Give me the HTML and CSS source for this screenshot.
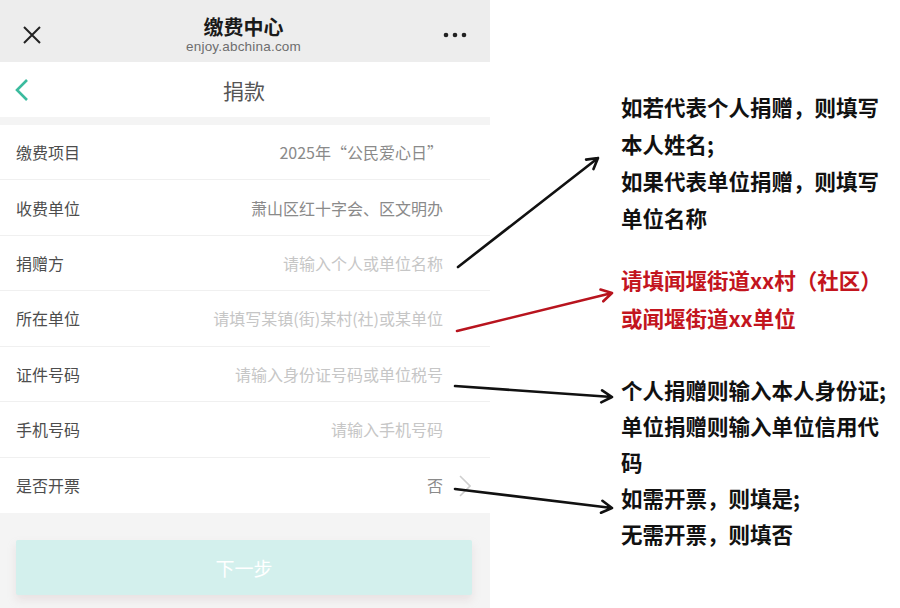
FILE: index.html
```html
<!DOCTYPE html>
<html lang="zh-CN">

<head>
  <meta charset="UTF-8">
  <meta name="viewport" content="width=device-width, initial-scale=1.0">
  <title>捐款</title>
  <link rel="stylesheet" href="styles.css">
</head>

<body>
  <div class="page">
    <div class="phone">
      <div class="topbar">
        <svg class="close-icon" width="20" height="20" viewBox="0 0 20 20">
          <path d="M2 2 L18 18 M18 2 L2 18" stroke="#222" stroke-width="2" fill="none" />
        </svg>
        <div class="topbar-title">
          <div class="topbar-name">缴费中心</div>
          <div class="topbar-url">enjoy.abchina.com</div>
        </div>
        <svg class="more-icon" width="24" height="6" viewBox="0 0 24 6">
          <circle cx="3" cy="3" r="2.3" fill="#222" />
          <circle cx="12" cy="3" r="2.3" fill="#222" />
          <circle cx="21" cy="3" r="2.3" fill="#222" />
        </svg>
      </div>

      <div class="navbar">
        <svg class="back-icon" width="14" height="24" viewBox="0 0 14 24">
          <path d="M12 2 L2 12 L12 22" stroke="#3bbb9e" stroke-width="2.6" fill="none" />
        </svg>
        <div class="navbar-title">捐款</div>
      </div>

      <div class="form-list">
        <div class="form-row">
          <span class="form-label">缴费项目</span>
          <span class="form-value">2025年“公民爱心日”</span>
        </div>
        <div class="form-row">
          <span class="form-label">收费单位</span>
          <span class="form-value">萧山区红十字会、区文明办</span>
        </div>
        <div class="form-row">
          <span class="form-label">捐赠方</span>
          <span class="form-value placeholder">请输入个人或单位名称</span>
        </div>
        <div class="form-row">
          <span class="form-label">所在单位</span>
          <span class="form-value placeholder">请填写某镇(街)某村(社)或某单位</span>
        </div>
        <div class="form-row">
          <span class="form-label">证件号码</span>
          <span class="form-value placeholder">请输入身份证号码或单位税号</span>
        </div>
        <div class="form-row">
          <span class="form-label">手机号码</span>
          <span class="form-value placeholder">请输入手机号码</span>
        </div>
        <div class="form-row">
          <span class="form-label">是否开票</span>
          <span class="form-value">否</span>
          <svg class="row-arrow" width="12" height="22" viewBox="0 0 12 22">
            <path d="M1 1 L11 11 L1 21" stroke="#cfcfcf" stroke-width="1.6" fill="none" />
          </svg>
        </div>
      </div>

      <div class="footer">
        <button class="next-btn">下一步</button>
      </div>
    </div>

    <div class="notes">
      <div class="note note-donor">如若代表个人捐赠，则填写<br>本人姓名;<br>如果代表单位捐赠，则填写<br>单位名称</div>
      <div class="note note-red">请填闻堰街道xx村（社区）<br>或闻堰街道xx单位</div>
      <div class="note note-id">个人捐赠则输入本人身份证;<br>单位捐赠则输入单位信用代<br>码</div>
      <div class="note note-invoice">如需开票，则填是;<br>无需开票，则填否</div>
    </div>

    <!-- annotation arrows drawn over the screenshot -->
    <svg class="arrows" width="900" height="608" viewBox="0 0 900 608">
      <g stroke="#111" stroke-width="2.6" fill="none" stroke-linecap="round" stroke-linejoin="round">
        <path d="M458 267 L598 158 M586.1 159.6 L598 158 L593.5 169.1" />
        <path d="M455 386 L612 397 M602.1 390.3 L612 397 L601.2 402.3" />
        <path d="M455 489 L612 508 M602.4 500.8 L612 508 L601 512.7" />
      </g>
      <path d="M457 331 L612 293 M600.5 289.6 L612 293 L603.3 301.3" stroke="#b8141e" stroke-width="2.6"
        fill="none" stroke-linecap="round" stroke-linejoin="round" />
    </svg>
  </div>
</body>

</html>
```

FILE: styles.css
```css
body {
  margin: 0;
  background: #fff;
  font-family: "Noto Sans CJK SC", "Noto Sans", sans-serif;
}

.page {
  position: relative;
  width: 900px;
  height: 608px;
  display: flex;
  overflow: hidden;
}

.phone {
  width: 490px;
  flex-shrink: 0;
  background: #f4f4f4;
}

/* top browser bar */
.topbar {
  height: 62px;
  box-sizing: border-box;
  background: #ededed;
  display: flex;
  align-items: center;
  padding: 8px 23px 0 22px;
}

.topbar-title {
  flex: 1;
  text-align: center;
  padding-left: 2px;
}

.topbar-name {
  font-size: 20px;
  font-weight: bold;
  color: #1a1a1a;
  line-height: 24px;
}

.topbar-url {
  font-family: "Liberation Sans", Arial, sans-serif;
  font-size: 13.5px;
  color: #6e6e6e;
  line-height: 16px;
  letter-spacing: 0.2px;
}

/* page nav */
.navbar {
  height: 55px;
  background: #fff;
  display: flex;
  align-items: center;
  padding-left: 15px;
  margin-bottom: 8px;
}

.navbar-title {
  flex: 1;
  text-align: center;
  font-size: 21px;
  color: #555;
  padding-right: 31px;
  margin-top: 1px;
}

/* form rows */
.form-list {
  background: #fff;
}

.form-row {
  height: 55.43px;
  box-sizing: border-box;
  display: flex;
  align-items: center;
  padding: 0 47px 0 16px;
  border-bottom: 1px solid #f0f0f0;
  position: relative;
}

.form-row:last-child {
  border-bottom: none;
}

.form-label {
  font-size: 16px;
  color: #4d4d4d;
}

.form-value {
  flex: 1;
  text-align: right;
  font-size: 16px;
  color: #8a8a8a;
}

.form-value.placeholder {
  color: #c6c6c6;
}

.row-arrow {
  position: absolute;
  right: 19px;
  top: 17px;
}

/* bottom button */
.footer {
  padding: 27px 18px 0 16px;
}

.next-btn {
  display: block;
  width: 100%;
  height: 55px;
  border: none;
  border-radius: 2px;
  background: #d3f0ed;
  color: #fff;
  font-family: "Noto Sans CJK SC", sans-serif;
  font-size: 19px;
  box-shadow: 0 5px 8px rgba(200, 170, 175, 0.25);
}

/* annotations */
.notes {
  flex: 1;
  padding: 88px 0 0 131px;
}

.note {
  font-size: 21.5px;
  font-weight: bold;
  color: #111;
  line-height: 37px;
  white-space: nowrap;
}

.note-red {
  color: #c3151e;
  margin-top: 25px;
  line-height: 38px;
}

.note-id {
  margin-top: 35px;
  line-height: 36px;
}

.note-invoice {
  line-height: 35.5px;
}

.arrows {
  position: absolute;
  left: 0;
  top: 0;
  pointer-events: none;
}
```
